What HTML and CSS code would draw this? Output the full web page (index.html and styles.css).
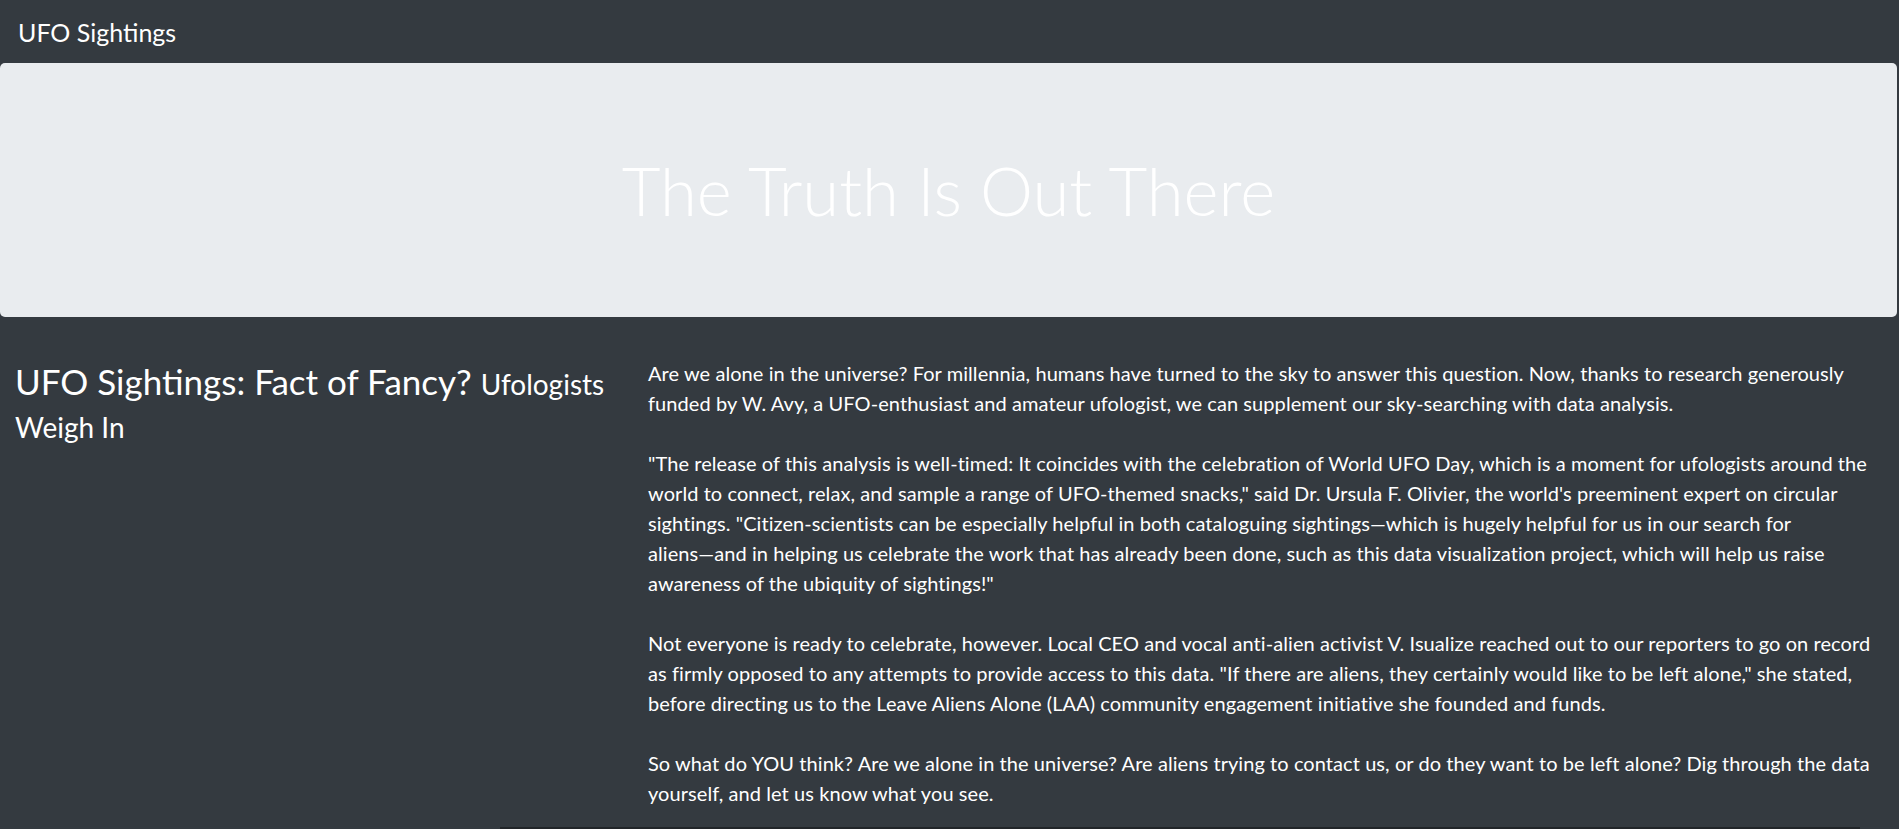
FILE: index.html
```html
<!DOCTYPE html>
<html lang="en">
<head>
<meta charset="utf-8">
<title>UFO Sightings</title>
<link rel="stylesheet" href="styles.css">
</head>
<body>
<nav class="navbar">
  <a class="navbar-brand" href="#">UFO Sightings</a>
</nav>
<div class="jumbotron">
  <h1 class="display">The Truth Is Out There</h1>
</div>
<main class="content">
  <div class="col-left">
    <h1 class="title"><span class="title-main">UFO Sightings: Fact of Fancy?</span> <small>Ufologists Weigh In</small></h1>
  </div>
  <div class="col-right">
    <p class="lead">Are we alone in the universe? For millennia, humans have turned to the sky to answer this question. Now, thanks to research generously funded by W. Avy, a UFO-enthusiast and amateur ufologist, we can supplement our sky-searching with data analysis.</p>
    <p class="lead">"The release of this analysis is well-timed: It coincides with the celebration of World UFO Day, which is a moment for ufologists around the world to connect, relax, and sample a range of UFO-themed snacks," said Dr. Ursula F. Olivier, the world's preeminent expert on circular sightings. "Citizen-scientists can be especially helpful in both cataloguing sightings—which is hugely helpful for us in our search for aliens&#8288;—&#8288;and in helping us celebrate the work that has already been done, such as this data visualization project, which will help us raise awareness of the ubiquity of sightings!"</p>
    <p class="lead">Not everyone is ready to celebrate, however. Local CEO and vocal anti-alien activist V. Isualize reached out to our reporters to go on record as firmly opposed to any attempts to provide access to this data. "If there are aliens, they certainly would like to be left alone," she stated, before directing us to the Leave Aliens Alone (LAA) community engagement initiative she founded and funds.</p>
    <p class="lead">So what do YOU think? Are we alone in the universe? Are aliens trying to contact us, or do they want to be left alone? Dig through the data yourself, and let us know what you see.</p>
  </div>
</main>
<div class="data-area">
  <div class="table-top"></div>
</div>
</body>
</html>
```

FILE: styles.css
```css
html, body {
  margin: 0;
  padding: 0;
}

body {
  background: #343a40;
  color: #ffffff;
  font-family: "Lato", "Liberation Sans", sans-serif;
  overflow: hidden;
}

.navbar {
  height: 63px;
  display: flex;
  align-items: center;
  padding: 0 18px;
  box-sizing: border-box;
}

.navbar-brand {
  color: #ffffff;
  text-decoration: none;
  font-size: 25px;
  line-height: 30px;
}

.jumbotron {
  height: 254px;
  margin-right: 2px;
  background: #e9ecef;
  border-radius: 5px;
  display: flex;
  align-items: center;
  justify-content: center;
}

.display {
  margin: 0;
  font-size: 67px;
  font-weight: 300;
  line-height: 1.2;
  color: #ffffff;
}

.content {
  display: grid;
  grid-template-columns: 1fr 2fr;
  padding-top: 41px;
}

.col-left,
.col-right {
  padding: 0 15px;
}

.title {
  margin: 0;
  font-size: 35px;
  font-weight: 400;
  line-height: 40px;
  padding-top: 3px;
}

.title small {
  font-size: 28px;
}

.lead {
  margin: 0 0 30px;
  font-size: 20px;
  line-height: 30px;
  letter-spacing: 0.07px;
}

.lead:last-child {
  margin-bottom: 0;
}

.data-area {
  display: flex;
  padding: 19px 39px 0 500px;
}

.table-top {
  flex: 1;
  height: 3px;
  background: #212529;
}
```
